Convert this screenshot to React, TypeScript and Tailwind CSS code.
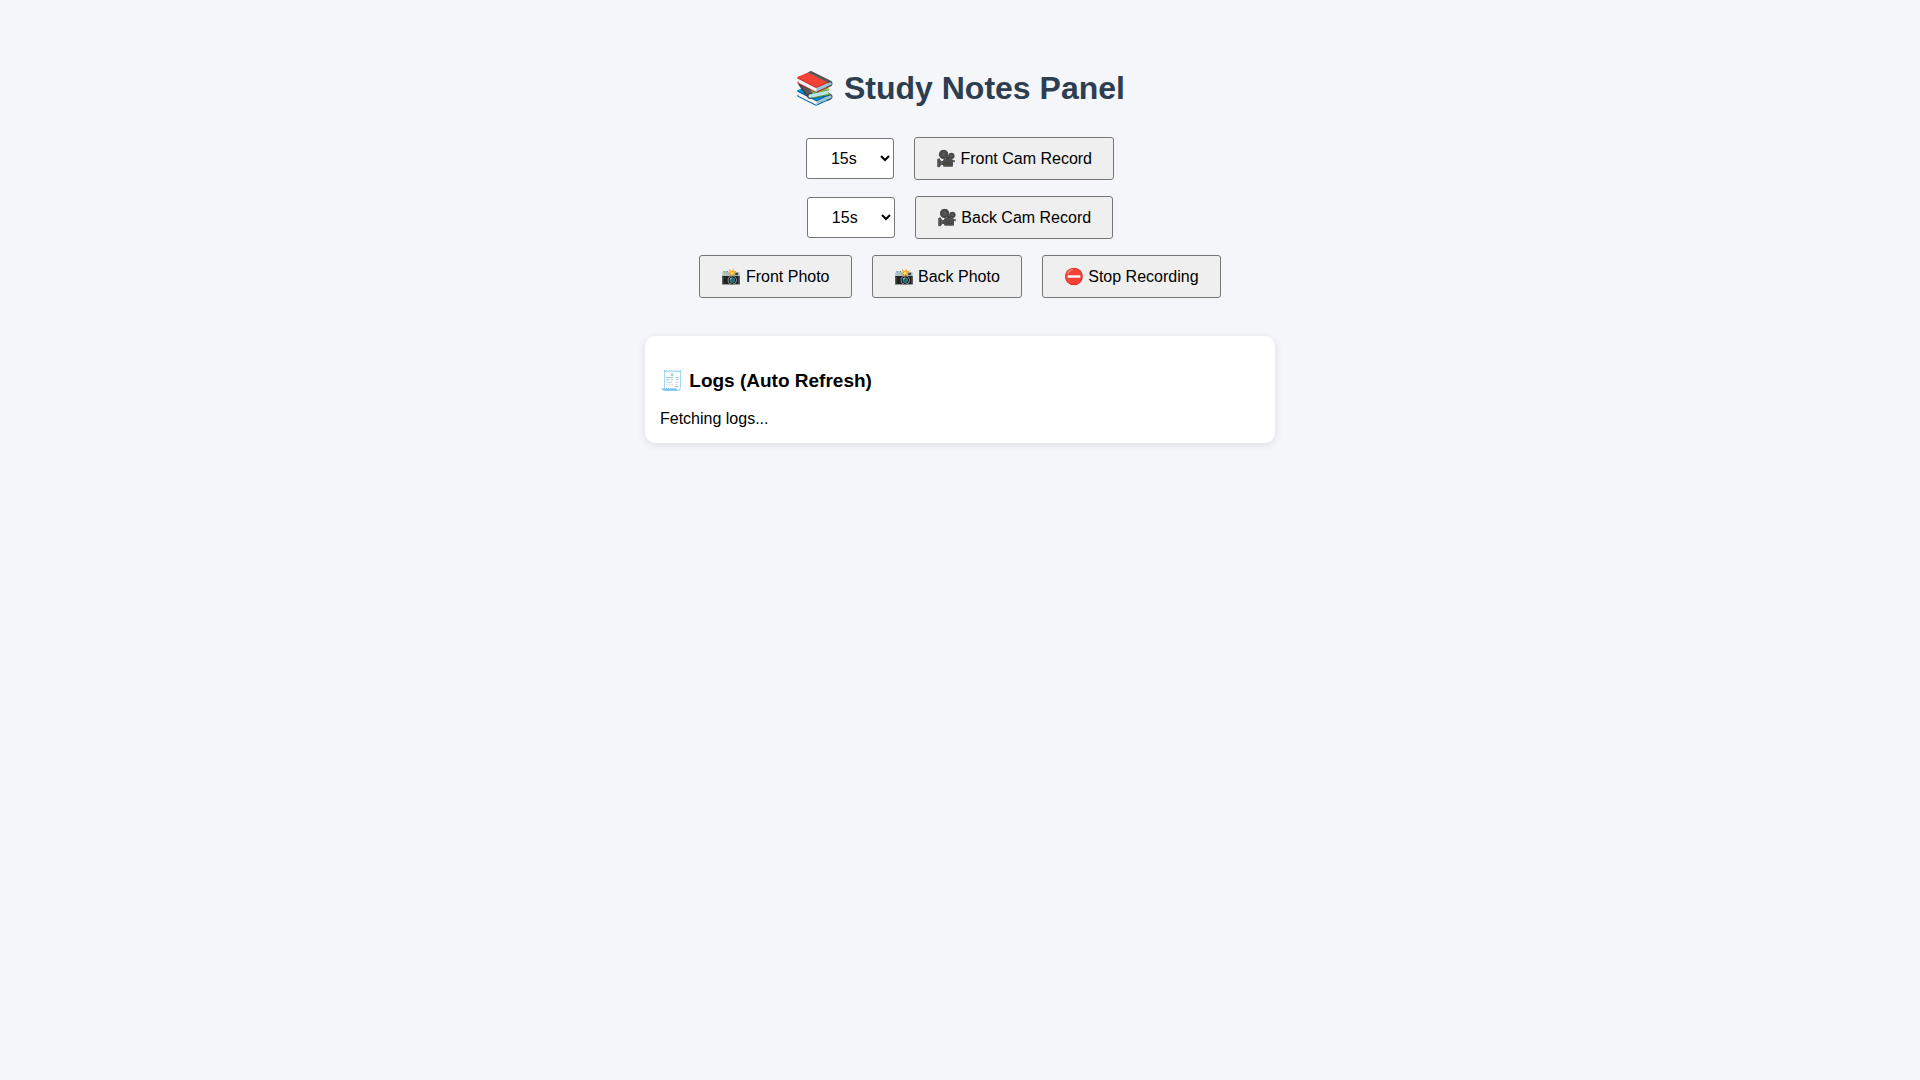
import { useState } from 'react'

const DURATIONS = ['15s', '30s', '60s']

const CONTROL = 'rounded-[3px] border border-[#767676] text-base leading-[17px] text-black'

function ActionButton({ label }: { label: string }) {
  return (
    <button type="button" className={`${CONTROL} bg-[#efefef] px-[21px] py-3 hover:bg-[#e5e5e5]`}>
      {label}
    </button>
  )
}

function RecordRow({ camera }: { camera: string }) {
  const [duration, setDuration] = useState('15s')

  return (
    <div className="flex items-center justify-center gap-5">
      <select
        aria-label={`${camera} camera duration`}
        value={duration}
        onChange={(e) => setDuration(e.target.value)}
        className={`${CONTROL} h-[41px] bg-white px-5`}
      >
        {DURATIONS.map((d) => (
          <option key={d}>{d}</option>
        ))}
      </select>
      <ActionButton label={`🎥 ${camera} Cam Record`} />
    </div>
  )
}

export default function App() {
  return (
    <main className="min-h-screen bg-[#f4f6fa] px-5 pt-[68px] font-['Liberation_Sans',Arial,sans-serif] text-base text-black">
      <h1 className="text-center text-[32px] leading-10 font-bold text-[#2c3e50]">📚 Study Notes Panel</h1>

      <div className="mt-[29px] flex flex-col gap-4">
        <RecordRow camera="Front" />
        <RecordRow camera="Back" />
        <div className="flex flex-wrap items-center justify-center gap-5">
          <ActionButton label="📸 Front Photo" />
          <ActionButton label="📸 Back Photo" />
          <ActionButton label="⛔ Stop Recording" />
        </div>
      </div>

      <section className="mx-auto mt-[38px] max-w-[630px] rounded-[10px] bg-white p-[15px] shadow-[0_2px_8px_rgba(0,0,0,0.1)]">
        <h2 className="mt-[18px] text-[19px] leading-6 font-bold">🧾 Logs (Auto Refresh)</h2>
        <p className="mt-[17px] leading-[18px]">Fetching logs...</p>
      </section>
    </main>
  )
}
